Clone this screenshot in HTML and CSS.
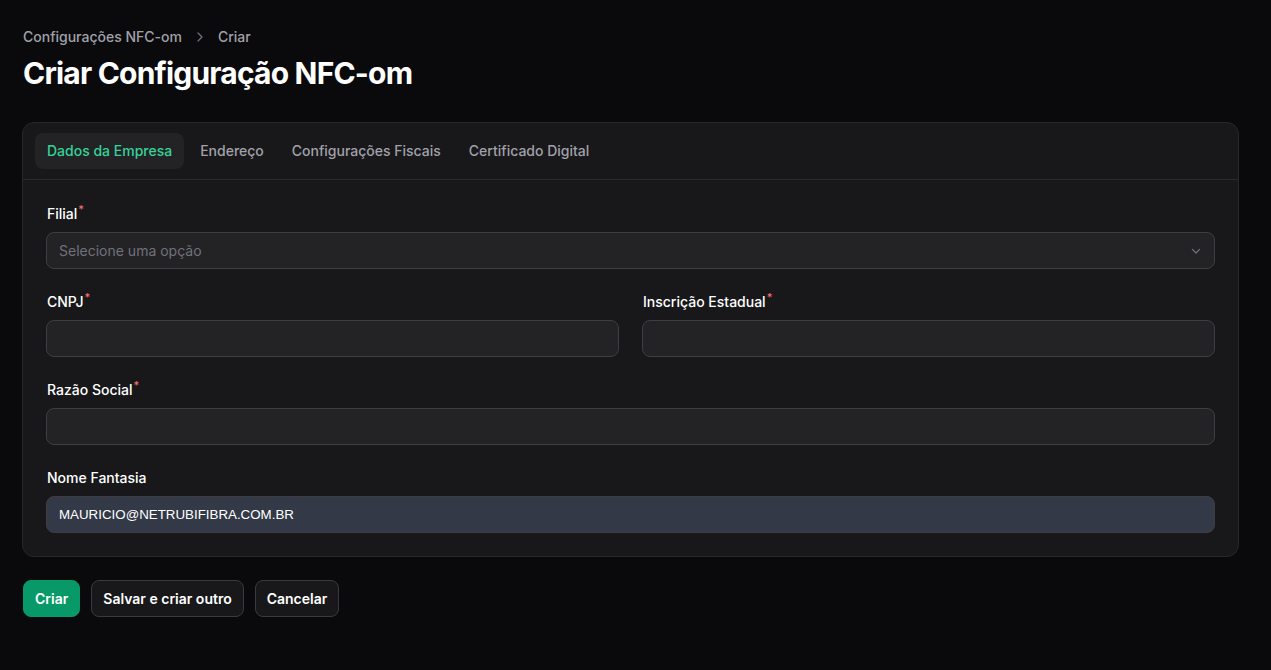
FILE: index.html
```html
<!DOCTYPE html>
<html lang="pt-BR">
  <head>
    <meta charset="utf-8">
    <title>Criar Configuração NFC-om</title>
    <link rel="stylesheet" href="styles.css">
  </head>
  <body>
    <main class="page">
      <header class="page-header">
        <nav class="breadcrumbs">
          <span>Configurações NFC-om</span>
          <svg class="crumb-sep" viewBox="0 0 20 20" width="16" height="16"><path d="M7.5 5l5 5-5 5" fill="none" stroke="currentColor" stroke-width="1.6" stroke-linecap="round" stroke-linejoin="round"/></svg>
          <span>Criar</span>
        </nav>
        <h1 class="page-title">Criar Configuração NFC-om</h1>
      </header>

      <form class="card">
        <div class="tabs">
          <button type="button" class="tab tab-active">Dados da Empresa</button>
          <button type="button" class="tab">Endereço</button>
          <button type="button" class="tab">Configurações Fiscais</button>
          <button type="button" class="tab">Certificado Digital</button>
        </div>

        <div class="fields">
          <div class="field">
            <label class="label">Filial<sup>*</sup></label>
            <div class="input select">
              <span class="placeholder">Selecione uma opção</span>
              <svg viewBox="0 0 20 20" width="16" height="16"><path d="M5.5 8l4.5 4.5L14.5 8" fill="none" stroke="currentColor" stroke-width="1.6" stroke-linecap="round" stroke-linejoin="round"/></svg>
            </div>
          </div>

          <div class="row">
            <div class="field">
              <label class="label">CNPJ<sup>*</sup></label>
              <div class="input"></div>
            </div>
            <div class="field">
              <label class="label">Inscrição Estadual<sup>*</sup></label>
              <div class="input"></div>
            </div>
          </div>

          <div class="field">
            <label class="label">Razão Social<sup>*</sup></label>
            <div class="input"></div>
          </div>

          <div class="field">
            <label class="label">Nome Fantasia</label>
            <div class="input autofilled">MAURICIO@NETRUBIFIBRA.COM.BR</div>
          </div>
        </div>
      </form>

      <div class="actions">
        <button type="button" class="btn btn-primary">Criar</button>
        <button type="button" class="btn">Salvar e criar outro</button>
        <button type="button" class="btn">Cancelar</button>
      </div>
    </main>
  </body>
</html>
```

FILE: styles.css
```css
body {
  margin: 0;
  background: #0a0a0c;
  color: #fff;
  font-family: Inter, "Noto Sans", sans-serif;
  font-size: 14px;
  line-height: 20px;
}
.page {
  display: flex;
  flex-direction: column;
  padding: 27px 32px 40px 22px;
}
.page-header {
  display: flex;
  flex-direction: column;
  gap: 8px;
  padding-left: 1px;
}
.breadcrumbs {
  display: flex;
  align-items: center;
  gap: 10px;
  color: #a1a1aa;
  font-weight: 500;
}
.crumb-sep {
  color: #71717a;
}
.page-title {
  margin: 0;
  font-size: 30px;
  line-height: 36px;
  font-weight: 700;
  letter-spacing: -0.8px;
}
.card {
  margin-top: 31px;
  background: #18181b;
  border: 1px solid #27272a;
  border-radius: 12px;
}
.tabs {
  display: flex;
  gap: 4px;
  padding: 10px 12px;
  border-bottom: 1px solid #2a2a2e;
}
.tab {
  font: inherit;
  font-weight: 500;
  color: #a1a1aa;
  background: none;
  border: 0;
  border-radius: 8px;
  padding: 8px 12px;
}
.tab-active {
  background: #232326;
  color: #34d399;
}
.fields {
  display: flex;
  flex-direction: column;
  gap: 23px;
  padding: 24px 23px 23px 23px;
}
.row {
  display: grid;
  grid-template-columns: 1fr 1fr;
  gap: 23px;
}
.field {
  display: flex;
  flex-direction: column;
  gap: 8px;
}
.label {
  font-weight: 500;
  padding-left: 1px;
}
.label sup {
  color: #f87171;
  font-size: 11px;
  line-height: 0;
  margin-left: 1px;
}
.input {
  height: 37px;
  box-sizing: border-box;
  display: flex;
  align-items: center;
  justify-content: space-between;
  padding: 0 12px;
  background: #232326;
  border: 1px solid #3e3e42;
  border-radius: 8px;
}
.placeholder {
  color: #71717a;
}
.select svg {
  color: #71717a;
  margin-right: -2px;
}
.autofilled {
  background: #333947;
  font-family: "Liberation Sans", Arial, sans-serif;
  font-size: 13.33px;
  color: #fff;
}
.actions {
  display: flex;
  gap: 11px;
  margin-top: 23px;
  padding-left: 1px;
}
.btn {
  font: inherit;
  font-weight: 600;
  color: #fff;
  height: 37px;
  padding: 0 11px;
  background: #18181b;
  border: 1px solid #3a3a3e;
  border-radius: 8px;
}
.btn-primary {
  background: #079a68;
  border-color: #079a68;
}
```
